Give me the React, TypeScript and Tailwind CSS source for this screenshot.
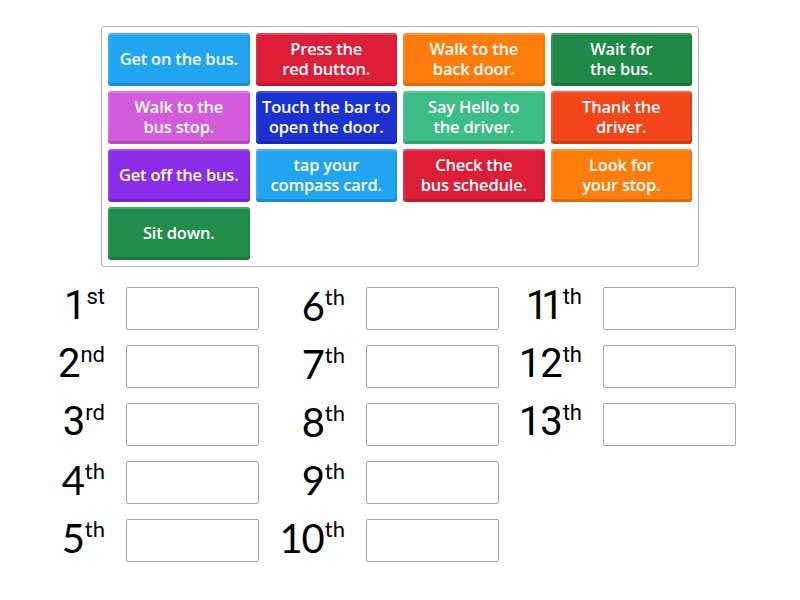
import React from 'react';

type Tile = { text: string[]; bg: string };

const TILES: Tile[] = [
  { text: ['Get on the bus.'], bg: 'bg-[#22a5f0]' },
  { text: ['Press the', 'red button.'], bg: 'bg-[#dc1e38]' },
  { text: ['Walk to the', 'back door.'], bg: 'bg-[#ff7d0c]' },
  { text: ['Wait for', 'the bus.'], bg: 'bg-[#1f8a48]' },
  { text: ['Walk to the', 'bus stop.'], bg: 'bg-[#d25cdc]' },
  { text: ['Touch the bar to', 'open the door.'], bg: 'bg-[#1b31d0]' },
  { text: ['Say Hello to', 'the driver.'], bg: 'bg-[#3dbd86]' },
  { text: ['Thank the', 'driver.'], bg: 'bg-[#f2461a]' },
  { text: ['Get off the bus.'], bg: 'bg-[#8b2de8]' },
  { text: ['tap your', 'compass card.'], bg: 'bg-[#22a5f0]' },
  { text: ['Check the', 'bus schedule.'], bg: 'bg-[#dc1e38]' },
  { text: ['Look for', 'your stop.'], bg: 'bg-[#ff7d0c]' },
  { text: ['Sit down.'], bg: 'bg-[#218d4b]' },
];

type Slot = { n: string; sup: string; font: string; tight?: boolean };

const ROBOTO = "font-['Roboto',sans-serif]";
const LATO = "font-['Lato',sans-serif]";

const COLUMNS: Slot[][] = [
  [
    { n: '1', sup: 'st', font: ROBOTO },
    { n: '2', sup: 'nd', font: ROBOTO },
    { n: '3', sup: 'rd', font: ROBOTO },
    { n: '4', sup: 'th', font: LATO },
    { n: '5', sup: 'th', font: LATO },
  ],
  [
    { n: '6', sup: 'th', font: LATO },
    { n: '7', sup: 'th', font: LATO },
    { n: '8', sup: 'th', font: LATO },
    { n: '9', sup: 'th', font: LATO },
    { n: '10', sup: 'th', font: LATO },
  ],
  [
    { n: '11', sup: 'th', font: ROBOTO, tight: true },
    { n: '12', sup: 'th', font: ROBOTO },
    { n: '13', sup: 'th', font: ROBOTO },
  ],
];

function Card({ tile }: { tile: Tile }) {
  return (
    <div
      className={`${tile.bg} h-[53px] pb-[2px] rounded-[3px] flex items-center justify-center text-center whitespace-pre-line text-white text-[16.5px] leading-[20px] font-semibold font-['Open_Sans',sans-serif] tracking-[-0.2px] shadow-[inset_0_2px_0_rgba(255,255,255,0.18),inset_0_-3px_0_rgba(0,0,0,0.14),inset_2px_0_0_rgba(255,255,255,0.08),inset_-2px_0_0_rgba(0,0,0,0.06)]`}
    >
      {tile.text.join('\n')}
    </div>
  );
}

function Answer({ slot }: { slot: Slot }) {
  return (
    <div className="flex items-center h-[43px]">
      <div className={`w-[62px] pb-[6px] flex justify-end items-start text-black ${slot.font}`}>
        <span className={`text-[40px] leading-[40px] ${slot.tight ? 'tracking-[-7px] mr-[5px]' : 'tracking-[-1px]'}`}>
          {slot.n}
        </span>
        <span className="text-[22px] leading-[22px] ml-[1px]">{slot.sup}</span>
      </div>
      <div className="ml-[21px] w-[133px] h-[43px] border border-[#a5a5a5] rounded-[2px] bg-white" />
    </div>
  );
}

export default function App() {
  return (
    <div className="w-[800px] h-[600px] bg-white font-['Lato',sans-serif] overflow-hidden">
      <div className="pt-[26px] flex justify-center">
        <div className="w-[598px] border border-[#b4b4b4] rounded-[3px] p-[6px] grid grid-cols-4 gap-x-[6px] gap-y-[5px]">
          {TILES.map((t, i) => (
            <Card key={i} tile={t} />
          ))}
        </div>
      </div>
      <div className="mt-[20px] ml-[43px] grid grid-cols-[240px_237px_216px]">
        {COLUMNS.map((col, ci) => (
          <div key={ci} className="flex flex-col gap-[15px]">
            {col.map((s) => (
              <Answer key={s.n} slot={s} />
            ))}
          </div>
        ))}
      </div>
    </div>
  );
}
